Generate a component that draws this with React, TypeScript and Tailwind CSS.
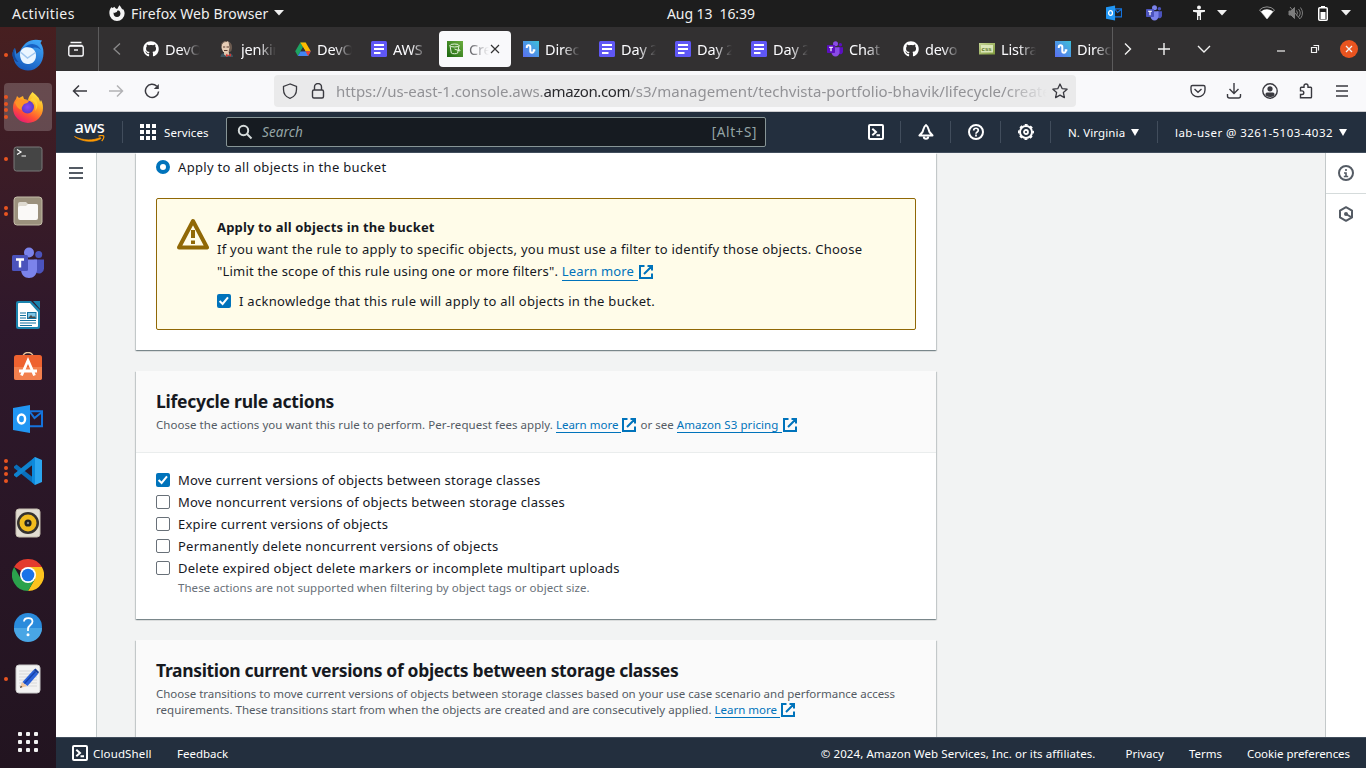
import React from "react";
import { FaGithub } from "react-icons/fa";

type IconProps = { size?: number; className?: string; children?: React.ReactNode; box?: number; sw?: number };

function Stroke({ size = 16, box = 16, sw = 2, className = "", children }: IconProps) {
  return (
    <svg width={size} height={size} viewBox={`0 0 ${box} ${box}`} fill="none" stroke="currentColor" strokeWidth={sw} className={`shrink-0 ${className}`}>
      {children}
    </svg>
  );
}

/* ---------- shared icons ---------- */

const External = () => (
  <Stroke size={16} className="-my-1 inline-block align-[0px] text-[#0073bb]">
    <path d="M9.500 2H14v4.500M6 10l7.500-7.500M14 9.500V14H2V2h4.500" />
  </Stroke>
);

const CloudShellIcon = () => (
  <Stroke>
    <rect x="1" y="1" width="14" height="14" rx="1" />
    <path d="M4.300 4.700 8 8l-3.700 3.300M8.500 11.300H12" />
  </Stroke>
);

const DocIcon = () => (
  <svg width="16" height="16" viewBox="0 0 16 16">
    <rect width="16" height="16" rx="1.500" fill="#5f57f5" />
    <path d="M3 4h10M3 8h10M3 12h6.500" stroke="#fff" strokeWidth="2" />
  </svg>
);

const WaveIcon = () => (
  <svg width="16" height="16" viewBox="0 0 16 16">
    <defs>
      <linearGradient id="wave" x1="0" y1="1" x2="1" y2="0">
        <stop offset="0" stopColor="#5b6df2" />
        <stop offset="1" stopColor="#3cc1d8" />
      </linearGradient>
    </defs>
    <rect width="16" height="16" fill="url(#wave)" />
    <path d="M3.800 7V6a1.500 1.500 0 0 1 3.500 0v4a1.600 1.600 0 0 0 3.400 0V9.300h1.600" fill="none" stroke="#fff" strokeWidth="2" />
  </svg>
);

const JenkinsIcon = () => (
  <svg width="16" height="16" viewBox="0 0 16 16">
    <path d="M1.500 16c0-3 2-4 4-4h4c2.500 0 4.500 1.500 4.500 4z" fill="#3f5560" />
    <path d="M5 10h5v4l-2 1.500-3-2z" fill="#dcc0a8" />
    <ellipse cx="7.300" cy="6" rx="4.800" ry="6" fill="#e6cdb6" />
    <path d="M9.500.8c3.700 1 4.500 6 2.700 9.400L9.500 11.500l1-5z" fill="#6b5a4f" />
    <path d="M4 6h2.200M7.500 6H10M5 9.500h3.500" stroke="#5a3d30" strokeWidth="1.200" />
    <path d="m7 13 2.500 1L12 12.500v3L9.500 14.600 7 16z" fill="#d33833" />
    <path d="M2.500 5C2 1.500 5 .5 8 .5" stroke="#6b5a4f" fill="none" />
  </svg>
);

const DriveIcon = () => (
  <svg width="16" height="16" viewBox="0 0 16 16">
    <path d="M5.300 1.500h5.400L8 6.200z" fill="#188038" />
    <path d="M5.300 1.500 8 6.200 2.900 15 .2 10.300z" fill="#1ea362" />
    <path d="M10.700 1.500 15.800 10.300h-5.400L5.300 1.500z" fill="#ffba00" />
    <path d="M5.600 10.300h10.200L13.100 15H2.900z" fill="#4285f4" />
    <path d="M10.400 10.300h5.400L13.100 15z" fill="#ea4335" />
    <path d="M8 6.200l2.400 4.100H5.600z" fill="#323031" />
  </svg>
);

const BucketIcon = () => (
  <svg width="16" height="16" viewBox="0 0 16 16">
    <defs>
      <linearGradient id="s3" x1="0" y1="1" x2="1" y2="0">
        <stop offset="0" stopColor="#1b660f" />
        <stop offset="1" stopColor="#6cae3e" />
      </linearGradient>
    </defs>
    <rect width="16" height="16" fill="url(#s3)" />
    <g fill="none" stroke="#e5f3dc" strokeWidth="1">
      <ellipse cx="7.500" cy="4.500" rx="4.500" ry="1.500" />
      <path d="M3 4.500 4.300 12c.3 1 6.100 1 6.400 0L12 4.500M7.500 8l4.500 1.700c1.500.6 1.500-.7-.5-1.700" />
    </g>
  </svg>
);

const TeamsIcon = ({ size = 16, tone = "#4b53bc", light = "#7b83eb" }: { size?: number; tone?: string; light?: string }) => (
  <svg width={size} height={size} viewBox="0 0 32 32">
    <circle cx="26.700" cy="7.500" r="3.500" fill={tone} />
    <circle cx="17" cy="5.500" r="5" fill={light} />
    <path d="M22 12.500h10v9a5 5 0 0 1-8 4z" fill={tone} />
    <path d="M9 12.500h16v10c0 5-3.500 8.500-8 8.500s-8-3.500-8-8.500z" fill={light} />
    <rect x="0" y="8" width="16" height="16" rx="1.500" fill={tone} />
    <path d="M4 12.500h8M8 12.500v8" stroke="#fff" strokeWidth="2.400" />
  </svg>
);

const OutlookIcon = ({ size = 30 }: { size?: number }) => (
  <svg width={size} height={size} viewBox="0 0 30 30">
    <path d="M16 7.300h13v15H16" fill="none" stroke="#1573dc" strokeWidth="2" />
    <path d="m17 8 4.500 6L29 8" fill="none" stroke="#1573dc" strokeWidth="2" />
    <path d="M0 4 17 1v28L0 26z" fill="#2196f3" />
    <ellipse cx="8.500" cy="15" rx="3.600" ry="4.500" fill="none" stroke="#fff" strokeWidth="2.400" />
  </svg>
);

const CssIcon = () => (
  <svg width="16" height="16" viewBox="0 0 16 16">
    <defs>
      <linearGradient id="cssbg" x1="0" y1="0" x2="1" y2="1">
        <stop offset="0" stopColor="#c5d494" />
        <stop offset="1" stopColor="#7f9a3b" />
      </linearGradient>
    </defs>
    <rect y="2" width="16" height="11.500" fill="url(#cssbg)" />
    <rect x="2" y="4" width="12" height="7.500" fill="#dbe6b8" />
    <text x="2.600" y="10" fontSize="6" fontWeight="700" fontFamily="Liberation Sans" fill="#5d7627">css</text>
  </svg>
);

/* ---------- top bar ---------- */

const Caret = ({ className = "" }: { className?: string }) => (
  <svg width="10" height="6" viewBox="0 0 10 6" fill="currentColor" className={`shrink-0 ${className}`}>
    <path d="M0 0h10L5 5.500z" />
  </svg>
);

function TopBar() {
  return (
    <header className="flex h-[27px] shrink-0 items-center bg-[#1d1d1d] pb-px text-[14px] text-[#f0f0f0]">
      <div className="flex w-[667px] shrink-0 items-center pl-3">
        <span className="w-[97px] tracking-[0.450px]">Activities</span>
        <svg width="16" height="16" viewBox="0 0 16 16" className="mr-[6px]">
          <path d="M5.300 1.800 3.800 3 2.300 2.200C.8 4 .2 6 .4 8.400a7.600 7.600 0 0 0 15.200 0c0-2-1-3.800-2-4.600l-.2.900C12.600 2.800 11.500 1.200 10.200.2c-.4 1.500-1.500 2.600-2 3.800-1-.2-2.300-1.100-2.900-2.200z" fill="#f4f4f4" />
          <circle cx="8" cy="8.600" r="3.400" fill="#1d1d1d" />
          <path d="M3.600 4.600h5.300L7.800 6.900 5 8z" fill="#f4f4f4" />
        </svg>
        <span className="w-[138px] whitespace-nowrap tracking-[0.110px]">Firefox Web Browser</span>
        <Caret className="ml-[5px]" />
      </div>
      <span className="w-[89px] shrink-0 whitespace-pre tracking-[-0.080px]">Aug 13  16:39</span>
      <div className="flex flex-1 items-center justify-end pr-[15px]">
        <OutlookIcon size={16} />
        <span className="ml-6"><TeamsIcon size={16} /></span>
        <svg width="14" height="16" viewBox="0 0 14 16" className="ml-[30px]" fill="#f2f2f2">
          <circle cx="7" cy="2.500" r="2" />
          <path d="M1 5h12v1.700L9 7.500V15H7.700v-4H6.300v4H5V7.500L1 6.700z" />
        </svg>
        <Caret className="ml-[11px]" />
        <svg width="16" height="14" viewBox="0 0 16 14" className="ml-[32px]">
          <path d="M.5 4A10.500 10.500 0 0 1 15.500 4L8 13z" fill="none" stroke="#8e8e8e" strokeWidth="1" />
          <path d="M2 5.500a9 9 0 0 1 12 0L8 13z" fill="#fff" />
        </svg>
        <svg width="15" height="14" viewBox="0 0 15 14" className="ml-[13px]" fill="none" stroke="#7d7d7d">
          <path d="M1 5h2l3.500-3.500v11L3 9H1z" fill="#7d7d7d" />
          <path d="M8.500 4.500q2 2.500 0 5M10.500 3q3.500 4 0 8M12.500 1.500q4 5.500 0 11M2 1l10 12" />
        </svg>
        <svg width="10" height="15" viewBox="0 0 10 15" className="ml-[15px]">
          <path d="M3 0h4v2H3z" fill="#fff" />
          <rect x=".75" y="1.750" width="8.500" height="12.500" rx="1" fill="none" stroke="#fff" strokeWidth="1.500" />
          <path d="M2.500 6h5v7h-5z" fill="#fff" />
        </svg>
        <Caret className="ml-[13px]" />
      </div>
    </header>
  );
}

/* ---------- dock ---------- */

const Thunderbird = () => (
  <svg width="32" height="32" viewBox="0 0 32 32">
    <defs>
      <linearGradient id="tb" x1=".7" y1="0" x2=".3" y2="1">
        <stop offset="0" stopColor="#3fa5f7" />
        <stop offset="1" stopColor="#1559bd" />
      </linearGradient>
    </defs>
    <path d="M3 9C-.5 13 .5 17 1.500 19 2.500 26 8.500 31.500 16 31.500 25 31.500 31.500 24 31.500 14 31.500 9 30 6 28.500 4l1.500-2.500C25 .5 19 0 14 4c-2 2-4 4-6 8L4.500 15z" fill="url(#tb)" />
    <path d="M3 9c-1 5-.5 10 3.500 14C4 23 1.500 21 .5 17 .5 13 1 11 3 9z" fill="#134a9f" />
    <path d="M13 8c5-5 13-4 16 3-3-3-7-3-9-2-3-1-5-1-7-1z" fill="#1762c6" />
    <path d="M8 15c0-3 2-5.500 5-6.500 6-1.500 11 2 11 8s-4 8.500-8.500 8.500S8 21 8 15z" fill="#eaf5ff" />
    <path d="m9 13.500 6.500 5.500 8-5.500" fill="none" stroke="#9fc6ef" strokeWidth="1.500" />
  </svg>
);

const FirefoxIcon = () => (
  <svg width="32" height="32" viewBox="0 0 32 32">
    <defs>
      <linearGradient id="ff" x1=".8" y1="0" x2=".25" y2="1">
        <stop offset="0" stopColor="#fff04a" />
        <stop offset=".35" stopColor="#ffae22" />
        <stop offset=".7" stopColor="#ff5034" />
        <stop offset="1" stopColor="#e5147c" />
      </linearGradient>
      <radialGradient id="ffc">
        <stop offset="0" stopColor="#8b46f5" />
        <stop offset="1" stopColor="#5b3bc6" />
      </radialGradient>
    </defs>
    <path d="M5 5 4 8c-2 2-3 5-3 9a15 15 0 0 0 30 0c0-4-1-6-2-8l-1 2C28 7 24 4 20.500 1c-2 2-4 5-4.500 8l-4-1-1-3-4 2z" fill="url(#ff)" />
    <circle cx="15.500" cy="16" r="6.500" fill="url(#ffc)" />
    <path d="M3 11c3-3 7-3 9-2l5 .8c-.5 2-3 2.700-5 3.200-1 2-3 3-2 6-4-1-6-4-7-8z" fill="#ff9426" />
    <path d="M18 9c5 1 7 6 5 11 4-4 3-11-2-14z" fill="#ffd035" />
  </svg>
);

const TerminalIcon = () => (
  <svg width="30" height="30" viewBox="0 0 30 30">
    <rect x="1" y="3" width="28" height="24" rx="2.500" fill="#454545" stroke="#7a7a7a" />
    <path d="M4 5.500 8 8 4 10.500M8.500 12H13" fill="none" stroke="#fff" strokeWidth="1.200" />
  </svg>
);

const FilesIcon = () => (
  <svg width="30" height="30" viewBox="0 0 30 30">
    <rect x="1" y="1" width="28" height="28" rx="3" fill="#9b917d" stroke="#c4bca9" />
    <path d="M5 8q0-2 2-2h6l2 2h8q2 0 2 2v3H5z" fill="#dedad0" />
    <path d="M5 12q0-2 2-2h6l2-2h8q2 0 2 2v12q0 2-2 2H7q-2 0-2-2z" fill="#faf9f7" />
  </svg>
);

const WriterIcon = () => (
  <svg width="30" height="30" viewBox="0 0 30 30">
    <path d="M5 1h13l9 9v17q0 2-2 2H5q-2 0-2-2V3q0-2 2-2z" fill="#1b84ae" />
    <path d="M6 3h11l8 9v14q0 1-1 1H6q-1 0-1-1V4q0-1 1-1z" fill="#fff" />
    <path d="M20 1h7v8z" fill="#1b84ae" />
    <path d="M7 13h6M7 15.500h6M7 18h6M7 20.500h16M7 23h16M7 25.500h12" stroke="#1472a0" strokeWidth="1.200" />
    <rect x="14.500" y="12.500" width="8.500" height="6" fill="#7fc4e4" stroke="#1472a0" />
    <path d="m15 18 3-3 2 2 1-1 2 2z" fill="#4b4b4b" />
  </svg>
);

const SoftwareIcon = () => (
  <svg width="30" height="30" viewBox="0 0 30 30">
    <path d="M10 5C10-1 20-1 20 5" fill="none" stroke="#eac49a" strokeWidth="1.500" />
    <rect x="1" y="3" width="28" height="25" rx="2.500" fill="#ee6230" />
    <path d="M1 15h28v10.500q0 2.500-2.500 2.500h-23Q1 28 1 25.500z" fill="#f2804e" />
    <path d="M8.500 23.500 15 8.500l6.500 15M6 19h18" fill="none" stroke="#fff" strokeWidth="2.800" />
  </svg>
);

const CodeIcon = () => (
  <svg width="30" height="30" viewBox="0 0 30 30">
    <path d="M1 10.500 3.500 8.500 22 23v6L1 12z" fill="#0a6fba" />
    <path d="M1 19.500 3.500 21.500 22 7V1L1 18z" fill="#0f83cf" />
    <path d="m22 1 7 3v22l-7 3V1z" fill="#2ba5ef" />
    <path d="M22 1v28l-3-3V4z" fill="#0b8add" />
  </svg>
);

const RhythmIcon = () => (
  <svg width="30" height="30" viewBox="0 0 30 30">
    <rect x="3" y="1" width="24" height="28" rx="3" fill="#e2ddd2" stroke="#c3bcae" />
    <circle cx="15" cy="15" r="11" fill="#35322f" />
    <circle cx="15" cy="15" r="8.500" fill="#f2bc1e" />
    <circle cx="15" cy="15" r="3.600" fill="#222" />
    <circle cx="15" cy="15" r="1.200" fill="#888" />
  </svg>
);

const ChromeIcon = () => (
  <svg width="32" height="32" viewBox="0 0 32 32">
    <path d="M16 16 2.140 8A16 16 0 0 1 29.860 8z" fill="#e33b2e" />
    <path d="M16 8h13.860A16 16 0 0 1 16 32l6.930-12z" fill="#fcc31e" />
    <path d="M2.140 8A16 16 0 0 0 16 32l6.930-12L9.070 20z" fill="#2ba24c" />
    <circle cx="16" cy="16" r="8" fill="#fff" />
    <circle cx="16" cy="16" r="6.300" fill="#1a73e8" />
  </svg>
);

const HelpIcon = () => (
  <svg width="30" height="30" viewBox="0 0 30 30">
    <circle cx="15" cy="15" r="14" fill="#2a8bdc" />
    <path d="M1 16h28a14 14 0 0 1-28 0z" fill="#49a6e5" />
    <path d="M11 9.500c0-4.500 8.500-4.500 8.500 0 0 3.500-4.500 3.500-4.500 7.500v2" fill="none" stroke="#fff" strokeWidth="1.800" />
    <circle cx="15" cy="22.800" r="1.500" fill="#fff" />
  </svg>
);

const EditorIcon = () => (
  <svg width="30" height="30" viewBox="0 0 30 30">
    <rect x="3" y="1" width="24" height="28" rx="3" fill="#f2f2f2" stroke="#c9c9c9" />
    <path d="M6 7h18M6 10h18M6 13h18M6 16h18M6 19h18M6 22h18" stroke="#d8d8d8" />
    <path d="m7 24 2-6 5 4z" fill="#f1c59a" />
    <path d="m7 24 .8-2.200L9.400 23z" fill="#333" />
    <path d="m9.500 18 11-12 4.500 4-10.500 12z" fill="#2b62da" />
    <path d="m11.500 19.500 11-12" stroke="#1642a8" strokeWidth="1.300" />
    <path d="m20.500 6 2-1.500L26 8l-1 2z" fill="#173f9c" />
  </svg>
);

const dock: { icon: React.ReactNode; dots: number; active?: boolean }[] = [
  { icon: <Thunderbird />, dots: 1 },
  { icon: <FirefoxIcon />, dots: 4, active: true },
  { icon: <TerminalIcon />, dots: 1 },
  { icon: <FilesIcon />, dots: 2 },
  { icon: <TeamsIcon size={32} />, dots: 0 },
  { icon: <WriterIcon />, dots: 0 },
  { icon: <SoftwareIcon />, dots: 0 },
  { icon: <OutlookIcon />, dots: 0 },
  { icon: <CodeIcon />, dots: 4 },
  { icon: <RhythmIcon />, dots: 0 },
  { icon: <ChromeIcon />, dots: 0 },
  { icon: <HelpIcon />, dots: 0 },
  { icon: <EditorIcon />, dots: 1 },
];

function Dock() {
  return (
    <aside className="flex w-14 shrink-0 flex-col items-center gap-1 bg-linear-to-b from-[#471f20] via-[#2f182b] via-40% to-[#221420] pt-1">
      {dock.map((d, i) => (
        <div key={i} className={`relative flex h-12 w-12 shrink-0 items-center justify-center rounded-[4px] ${d.active ? "bg-white/20" : ""}`}>
          {d.icon}
          <div className="absolute inset-y-0 left-0 flex flex-col items-center justify-center gap-[2.500px]">
            {Array.from({ length: d.dots }, (_, k) => (
              <span key={k} className="h-1 w-1 rounded-full bg-[#e95420]" />
            ))}
          </div>
        </div>
      ))}
      <div className="mt-[25px] grid grid-cols-3 gap-1">
        {Array.from({ length: 9 }, (_, k) => (
          <span key={k} className="h-1 w-1 rounded-[1px] bg-[#f2f2f2]" />
        ))}
      </div>
    </aside>
  );
}

/* ---------- browser chrome ---------- */

const tabs: { icon: React.ReactNode; label: string; active?: boolean }[] = [
  { icon: <FaGithub size={16} color="#fff" />, label: "DevO" },
  { icon: <JenkinsIcon />, label: "jenkin" },
  { icon: <DriveIcon />, label: "DevO" },
  { icon: <DocIcon />, label: "AWS" },
  { icon: <BucketIcon />, label: "Cre", active: true },
  { icon: <WaveIcon />, label: "Direc" },
  { icon: <DocIcon />, label: "Day 2" },
  { icon: <DocIcon />, label: "Day 2" },
  { icon: <DocIcon />, label: "Day 2" },
  { icon: <TeamsIcon tone="#5b0fbf" light="#8a4be6" />, label: "Chat" },
  { icon: <FaGithub size={16} color="#fff" />, label: "devo" },
  { icon: <CssIcon />, label: "Listra" },
  { icon: <WaveIcon />, label: "Direc" },
];

function TabStrip() {
  return (
    <div className="flex h-11 shrink-0 items-center bg-[#323031] text-[#fbfbfe]">
      <div className="flex h-full w-[43px] shrink-0 items-center border-r border-[#5c5b5c] pl-3">
        <Stroke sw={1.400}>
          <path d="M2.500 1.500h11M1.500 4.500h13" />
          <rect x=".8" y="5" width="14.400" height="10" rx="1.500" />
          <path d="M6 9h4" />
        </Stroke>
      </div>
      <Stroke sw={1.300} className="ml-[10px] text-[#8b8a8b]">
        <path d="m11 2.500-6 5.500 6 5.500" />
      </Stroke>
      <div className="ml-[10px] flex h-full w-[978px] shrink-0 items-center gap-1 overflow-hidden border-r border-[#5c5b5c]">
        {tabs.map((t, i) => (
          <div key={i} className={`flex h-9 w-[72px] shrink-0 items-center rounded-[4px] pl-2 ${t.active ? "bg-[#f9f9fb] text-[#6b6b70]" : ""}`}>
            {t.icon}
            <span className={`ml-[6px] overflow-hidden whitespace-pre text-[14.500px] leading-5 ${t.active ? "w-[20px] mask-r-from-10% tracking-[-0.200px]" : "w-[35px] mask-r-from-50% tracking-[-0.150px]"}`}>{t.label}</span>
            {t.active && (
              <Stroke sw={1.200} size={10} box={10} className="ml-px text-[#333]">
                <path d="m1 1 8 8M9 1 1 9" />
              </Stroke>
            )}
          </div>
        ))}
      </div>
      <div className="flex flex-1 items-center text-[#f2f2f2]">
        <Stroke sw={1.400} className="ml-[7px]"><path d="m5 2.500 5.500 5.500L5 13.500" /></Stroke>
        <Stroke sw={1.400} className="ml-5"><path d="M8 2v12M2 8h12" /></Stroke>
        <Stroke sw={1.400} className="ml-6"><path d="m2 5 6 6 6-6" /></Stroke>
        <Stroke sw={1.200} size={10} box={10} className="ml-[64px] mt-1"><path d="M1 5h8" /></Stroke>
        <Stroke sw={1.200} size={10} box={10} className="ml-6"><path d="M1.500 3.500h5v5h-5zM3.500 1.500h5v5" /></Stroke>
        <span className="ml-5 flex h-[18px] w-[18px] items-center justify-center rounded-full bg-[#e95420]">
          <Stroke sw={1.300} size={8} box={8}><path d="m1 1 6 6M7 1 1 7" /></Stroke>
        </span>
      </div>
    </div>
  );
}

function UrlBar() {
  return (
    <div className="flex h-[41px] shrink-0 items-center border-b border-[#cccccf] bg-[#f9f9fb] text-[#3a3a40]">
      <Stroke sw={1.500} className="ml-4"><path d="M15 8H1.500M7 2.500 1.500 8 7 13.500" /></Stroke>
      <Stroke sw={1.500} className="ml-5 text-[#b2b2b5]"><path d="M1 8h13.500M9 2.500 14.500 8 9 13.500" /></Stroke>
      <Stroke sw={1.500} className="ml-5">
        <path d="M12.800 3.300A6.600 6.600 0 1 0 14.600 8.500" />
        <path d="M14.800 1v5h-5z" fill="currentColor" stroke="none" />
      </Stroke>
      <div className="ml-[114px] flex h-8 w-[802px] shrink-0 items-center rounded-[4px] bg-[#eaeaeb] pl-2">
        <Stroke sw={1.300}><path d="M8 1 1.500 3.500v3C1.500 11 4 14 8 15.300c4-1.300 6.500-4.300 6.500-8.800v-3z" /></Stroke>
        <Stroke sw={1.400} className="ml-3">
          <rect x="2.500" y="7" width="11" height="8" rx="1.500" />
          <path d="M4.500 7V4a3.500 3.500 0 0 1 7 0v3" />
        </Stroke>
        <div className="ml-[10px] w-[711px] overflow-hidden whitespace-nowrap mask-r-from-94% text-[15px] leading-6 text-[#929296]">
          <span className="tracking-[-0.065px]">https://us-east-1.console.aws.</span>
          <span className="tracking-[-0.400px] text-[#2a2a2e]">amazon.com</span>
          <span className="tracking-[0.045px]">/s3/management/techvista-portfolio-bhavik/lifecycle/create</span>
        </div>
        <Stroke sw={1.300} className="ml-[5px]">
          <path d="m8 1 2.100 4.600 5 .6-3.700 3.400 1 5L8 12.100l-4.400 2.500 1-5L.9 6.200l5-.6z" strokeLinejoin="round" />
        </Stroke>
      </div>
      <Stroke sw={1.400} className="ml-[114px]">
        <path d="M2.500 2.500h11q1.500 0 1.500 1.500v3c0 9-14 9-14 0V4q0-1.500 1.500-1.500z" />
        <path d="m4.500 6 3.500 3.200L11.500 6" />
      </Stroke>
      <Stroke sw={1.400} className="ml-5"><path d="M8 0v10M3.500 6 8 10.500 12.500 6M1.500 11v2q0 2 2 2h9q2 0 2-2v-2" /></Stroke>
      <Stroke sw={1.400} className="ml-[20px]">
        <circle cx="8" cy="8" r="7.200" />
        <circle cx="8" cy="5.800" r="2.600" fill="currentColor" stroke="none" />
        <path d="M3.500 12.500V11q0-1.500 1.500-1.500h6q1.500 0 1.500 1.500v1.500q-4 3-9 0z" fill="currentColor" stroke="none" />
      </Stroke>
      <Stroke sw={1.400} className="ml-5">
        <path d="M2.500 14.800V11.500h1.500a1.800 1.800 0 0 0 0-3.600H2.500V5q0-.8.800-.8H6V3a2 2 0 0 1 4 0v1.200h2.700q.8 0 .8.800v9q0 .8-.8.800z" />
      </Stroke>
      <Stroke sw={1.400} className="ml-5"><path d="M2 3h12M2 8h12M2 13h12" /></Stroke>
    </div>
  );
}

/* ---------- AWS console ---------- */

const Divider = ({ className = "" }: { className?: string }) => <span className={`h-[22px] w-px bg-[#414d5c] ${className}`} />;

function ConsoleHeader() {
  return (
    <div className="flex h-[41px] shrink-0 items-center border-b border-[#414d5c] bg-[#232f3e] text-[11.500px] text-white">
      <div className="ml-[18px] flex w-[31px] flex-col items-center">
        <span className="h-[15px] text-[16.500px] font-medium leading-[11px] tracking-[-0.200px]">aws</span>
        <svg width="31" height="8" viewBox="0 0 31 8" className="-mt-px">
          <path d="M.5 1.500C8 7 20 8 27 3.500l-.7-1C20 5.700 9 6 .5 1.500z" fill="#f90" stroke="#f90" strokeWidth=".7" />
          <path d="M24.500 1.200c2-.8 4.500-.8 5.200-.2.300 1-.4 3.500-2 5" fill="none" stroke="#f90" strokeWidth="1.200" />
        </svg>
      </div>
      <Divider className="ml-[17px]" />
      <div className="ml-[17px] grid grid-cols-3 gap-[2px]">
        {Array.from({ length: 9 }, (_, k) => (
          <span key={k} className="h-[4px] w-[4px] bg-white" />
        ))}
      </div>
      <span className="ml-2 w-[62px] pt-px tracking-[0.100px]">Services</span>
      <div className="flex h-[30px] w-[540px] shrink-0 items-center rounded-[2px] border border-[#879596] bg-[#161b21] text-[13.500px] text-[#95a5a6]">
        <Stroke sw={2} className="ml-[10px] text-[#d5dbdb]">
          <circle cx="6.500" cy="6.500" r="4.700" />
          <path d="m10 10 4.500 4.500" />
        </Stroke>
        <span className="ml-[9px] flex-1 italic tracking-[0.100px]">Search</span>
        <span className="mr-[8px] tracking-[0.600px]">[Alt+S]</span>
      </div>
      <span className="ml-[102px]"><CloudShellIcon /></span>
      <Divider className="ml-4" />
      <Stroke sw={2} className="ml-[17px]">
        <path d="M8 1C5.500 2.500 5.500 6 4.500 8L1.500 11.500h13L11.500 8c-1-2-1-5.500-3.500-7z" strokeLinejoin="round" />
        <path d="M5.800 12.500a2.200 2.200 0 0 0 4.400 0" />
      </Stroke>
      <Divider className="ml-4" />
      <Stroke sw={2} className="ml-[17px]">
        <circle cx="8" cy="8" r="7" />
        <path d="M5.700 6.500c0-3 4.600-3 4.600 0C10.300 8 8 8 8 9.800M8 10.500v2" strokeWidth="1.700" />
      </Stroke>
      <Divider className="ml-4" />
      <Stroke sw={2} className="ml-[17px]">
        <circle cx="8" cy="8" r="6" />
        <circle cx="8" cy="8" r="7.200" strokeWidth="1.600" strokeDasharray="2.900 2.755" strokeDashoffset="1.450" />
        <circle cx="8" cy="8" r="2" strokeWidth="1.800" />
      </Stroke>
      <Divider className="ml-4" />
      <span className="ml-[17px] w-[63px] whitespace-nowrap pt-px tracking-[0.120px]">N. Virginia</span>
      <svg width="8" height="7" viewBox="0 0 8 7" fill="#fff"><path d="M0 0h8L4 7z" /></svg>
      <Divider className="ml-[18px]" />
      <span className="ml-[17px] w-[164px] whitespace-nowrap pt-px tracking-[0.450px]">lab-user @ 3261-5103-4032</span>
      <svg width="8" height="7" viewBox="0 0 8 7" fill="#fff"><path d="M0 0h8L4 7z" /></svg>
    </div>
  );
}

function Check({ on = false }: { on?: boolean }) {
  return on ? (
    <svg width="14" height="14" viewBox="0 0 14 14" className="shrink-0">
      <rect width="14" height="14" rx="2" fill="#0073bb" />
      <path d="m2.600 7 3 3L11 3.400" fill="none" stroke="#fff" strokeWidth="2" />
    </svg>
  ) : (
    <span className="h-[14px] w-[14px] shrink-0 rounded-[2px] border border-[#687078] bg-white" />
  );
}

const Link = ({ children, className = "" }: { children: React.ReactNode; className?: string }) => (
  <>
    <a className={`border-b border-[#0073bb] text-[#0073bb] ${className}`}>{children}&nbsp;</a>
    <External />
  </>
);

const card = "w-[800px] shrink-0 shadow-[0_1px_1px_0_rgba(0,28,36,0.3),1px_1px_1px_0_rgba(0,28,36,0.15),-1px_1px_1px_0_rgba(0,28,36,0.15)]";

const actions = [
  "Move current versions of objects between storage classes",
  "Move noncurrent versions of objects between storage classes",
  "Expire current versions of objects",
  "Permanently delete noncurrent versions of objects",
  "Delete expired object delete markers or incomplete multipart uploads",
];

function Content() {
  return (
    <main className="flex min-w-0 flex-1 flex-col gap-[21px] overflow-hidden bg-[#f2f3f3] pl-[39px] text-[13px] leading-[22px] text-[#16191f]">
      <section className={`${card} h-[197px] bg-white px-5 pt-[3px]`}>
        <label className="flex items-center gap-2">
          <span className="h-[14px] w-[14px] rounded-full border-[4px] border-[#0073bb] bg-white" />
          <span className="tracking-[0.320px]">Apply to all objects in the bucket</span>
        </label>
        <div className="mt-5 flex h-[132px] rounded-[2px] border border-[#906806] bg-[#fffce9] pl-5 pt-[17px]">
          <svg width="32" height="32" viewBox="0 0 32 32" className="mt-[2px] shrink-0" fill="none" stroke="#906806" strokeWidth="4">
            <path d="M16 3 30 29.500H2z" strokeLinejoin="round" />
            <path d="M16 12v8M16 22.500v3.500" />
          </svg>
          <div className="ml-2 whitespace-nowrap">
            <p className="font-bold tracking-[0.160px]">Apply to all objects in the bucket</p>
            <p className="tracking-[0.265px]">If you want the rule to apply to specific objects, you must use a filter to identify those objects. Choose</p>
            <p><span className="tracking-[0.195px]">"Limit the scope of this rule using one or more filters". </span><Link className="tracking-[0.150px]">Learn more</Link></p>
            <label className="mt-2 flex items-center gap-2">
              <Check on />
              <span className="tracking-[0.285px]">I acknowledge that this rule will apply to all objects in the bucket.</span>
            </label>
          </div>
        </div>
      </section>

      <section className={`${card} h-[248px] bg-white`}>
        <div className="h-[82px] border-b border-[#eaeded] bg-[#fafafa] px-5 pt-[19px]">
          <h2 className="text-[17.500px] font-bold leading-[22px] tracking-[-0.240px]">Lifecycle rule actions</h2>
          <p className="mt-[5px] whitespace-nowrap text-[11.500px] leading-4 text-[#545b64]">
            <span className="tracking-[0.040px]">Choose the actions you want this rule to perform. Per-request fees apply. </span>
            <Link>Learn more</Link>
            <span className="tracking-[0.020px]"> or see </span>
            <Link className="tracking-[0.080px]">Amazon S3 pricing</Link>
          </p>
        </div>
        <div className="px-5 pt-[16px]">
          {actions.map((a, i) => (
            <label key={a} className={`flex items-center gap-2 ${i < 3 ? "tracking-[0.200px]" : "tracking-[0.235px]"}`}>
              <Check on={i === 0} />
              <span>{a}</span>
            </label>
          ))}
          <p className="pl-[22px] text-[11.500px] leading-[17px] tracking-[0.050px] text-[#687078]">These actions are not supported when filtering by object tags or object size.</p>
        </div>
      </section>

      <section className={`${card} h-[120px] bg-[#fafafa] px-5 pt-[19px]`}>
        <h2 className="text-[17.500px] font-bold leading-[22px] tracking-[-0.340px]">Transition current versions of objects between storage classes</h2>
        <p className="mt-[5px] whitespace-nowrap text-[11.500px] leading-4 text-[#545b64]">
          <span className="tracking-[-0.020px]">Choose transitions to move current versions of objects between storage classes based on your use case scenario and performance access</span>
          <br />
          <span className="tracking-[0.018px]">requirements. These transitions start from when the objects are created and are consecutively applied. </span>
          <Link>Learn more</Link>
        </p>
      </section>
    </main>
  );
}

function Footer() {
  return (
    <footer className="flex h-[31px] shrink-0 items-center border-t border-[#414d5c] bg-[#232f3e] pr-4 text-[11.500px] text-white">
      <span className="ml-4"><CloudShellIcon /></span>
      <span className="ml-[5px] w-[84px] pt-px tracking-[0.150px]">CloudShell</span>
      <span className="flex-1 pt-px">Feedback</span>
      <span className="pt-px tracking-[0.075px]">© 2024, Amazon Web Services, Inc. or its affiliates.</span>
      <span className="ml-[30px] pt-px">Privacy</span>
      <span className="ml-[25px] pt-px">Terms</span>
      <span className="ml-[25px] pt-px tracking-[-0.050px]">Cookie preferences</span>
    </footer>
  );
}

export default function App() {
  return (
    <div className="flex h-[768px] w-[1366px] flex-col overflow-hidden font-['Noto_Sans',sans-serif]">
      <TopBar />
      <div className="flex min-h-0 flex-1">
        <Dock />
        <div className="flex min-w-0 flex-1 flex-col">
          <TabStrip />
          <UrlBar />
          <ConsoleHeader />
          <div className="flex min-h-0 flex-1">
            <nav className="flex w-[41px] shrink-0 justify-center border-r border-[#c4cbcc] bg-white pt-3 text-[#545b64]">
              <Stroke><path d="M1 3h14M1 8h14M1 13h14" /></Stroke>
            </nav>
            <Content />
            <aside className="w-[41px] shrink-0 border-l border-[#c4c9ca] bg-white text-[#545b64]">
              <div className="flex h-[41px] items-center justify-center border-b border-[#d5dbdb]">
                <Stroke>
                  <circle cx="8" cy="8" r="7" />
                  <path d="M8 4v2M6 8h2v3.500M5.800 11.500h4.400" strokeWidth="1.600" />
                </Stroke>
              </div>
              <div className="flex h-10 items-center justify-center">
                <Stroke>
                  <path d="M8 1.200 14 4.600v6.800l-6 3.400-6-3.400V4.600z" strokeLinejoin="round" />
                  <circle cx="8" cy="8" r="2" fill="currentColor" stroke="none" />
                  <path d="m8 8 5 3" />
                </Stroke>
              </div>
            </aside>
          </div>
          <Footer />
        </div>
      </div>
    </div>
  );
}
